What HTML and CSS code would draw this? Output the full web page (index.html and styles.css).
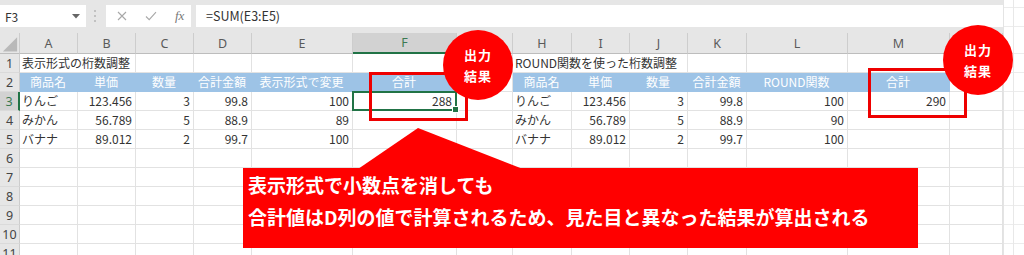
FILE: index.html
```html
<!DOCTYPE html>
<html lang="ja">
  <head>
    <meta charset="utf-8">
    <title>桁数調整</title>
    <link rel="stylesheet" href="styles.css">
  </head>
  <body>
    <div class="page">
      <div class="excel">

        <div class="toolbar">
          <div class="namebox">
            <span>F3</span>
            <svg class="drop" width="8" height="5" viewBox="0 0 8 5"><polygon points="0,0 8,0 4,4.5" fill="#666"/></svg>
          </div>
          <svg class="dots" width="4" height="14" viewBox="0 0 4 14">
            <circle cx="2" cy="2" r="1" fill="#b5b5b5"/>
            <circle cx="2" cy="7" r="1" fill="#b5b5b5"/>
            <circle cx="2" cy="12" r="1" fill="#b5b5b5"/>
          </svg>
          <div class="funcs">
            <svg width="10" height="10" viewBox="0 0 10 10"><path d="M1 1 L9 9 M9 1 L1 9" stroke="#a8a8a8" stroke-width="1.1" fill="none"/></svg>
            <svg width="12" height="10" viewBox="0 0 12 10"><path d="M1 5.5 L4.2 8.6 L11 1.2" stroke="#a8a8a8" stroke-width="1.1" fill="none"/></svg>
            <span class="fx">fx</span>
          </div>
          <div class="formula">=SUM(E3:E5)</div>
        </div>

        <div class="sheet">
          <!-- column headers -->
          <div class="ch corner">
            <svg width="20" height="20" viewBox="0 0 20 20"><polygon points="3,19 18,19 18,4" fill="#b9b9b9"/></svg>
          </div>
          <div class="ch">A</div><div class="ch">B</div><div class="ch">C</div><div class="ch">D</div>
          <div class="ch">E</div><div class="ch sel">F</div><div class="ch"></div><div class="ch">H</div>
          <div class="ch">I</div><div class="ch">J</div><div class="ch">K</div><div class="ch">L</div>
          <div class="ch">M</div><div class="ch"></div>

          <!-- row 1 -->
          <div class="rh">1</div>
          <div class="c span2">表示形式の桁数調整</div>
          <div class="c"></div><div class="c"></div><div class="c"></div><div class="c"></div><div class="c"></div>
          <div class="c span3">ROUND関数を使った桁数調整</div>
          <div class="c"></div><div class="c"></div><div class="c"></div><div class="c"></div>

          <!-- row 2 -->
          <div class="rh">2</div>
          <div class="c h">商品名</div><div class="c h">単価</div><div class="c h">数量</div>
          <div class="c h">合計金額</div><div class="c h">表示形式で変更</div><div class="c h">合計</div>
          <div class="c"></div>
          <div class="c h">商品名</div><div class="c h">単価</div><div class="c h">数量</div>
          <div class="c h">合計金額</div><div class="c h">ROUND関数</div><div class="c h">合計</div>
          <div class="c"></div>

          <!-- row 3 -->
          <div class="rh sel">3</div>
          <div class="c">りんご</div><div class="c n">123.456</div><div class="c n">3</div>
          <div class="c n">99.8</div><div class="c n">100</div><div class="c n active">288</div>
          <div class="c"></div>
          <div class="c">りんご</div><div class="c n">123.456</div><div class="c n">3</div>
          <div class="c n">99.8</div><div class="c n">100</div><div class="c n">290</div>
          <div class="c"></div>

          <!-- row 4 -->
          <div class="rh">4</div>
          <div class="c">みかん</div><div class="c n">56.789</div><div class="c n">5</div>
          <div class="c n">88.9</div><div class="c n">89</div><div class="c"></div>
          <div class="c"></div>
          <div class="c">みかん</div><div class="c n">56.789</div><div class="c n">5</div>
          <div class="c n">88.9</div><div class="c n">90</div><div class="c"></div>
          <div class="c"></div>

          <!-- row 5 -->
          <div class="rh">5</div>
          <div class="c">バナナ</div><div class="c n">89.012</div><div class="c n">2</div>
          <div class="c n">99.7</div><div class="c n">100</div><div class="c"></div>
          <div class="c"></div>
          <div class="c">バナナ</div><div class="c n">89.012</div><div class="c n">2</div>
          <div class="c n">99.7</div><div class="c n">100</div><div class="c"></div>
          <div class="c"></div>

          <div class="rh">6</div>
          <div class="c"></div><div class="c"></div><div class="c"></div><div class="c"></div><div class="c"></div><div class="c"></div><div class="c"></div>
          <div class="c"></div><div class="c"></div><div class="c"></div><div class="c"></div><div class="c"></div><div class="c"></div><div class="c"></div>
          <div class="rh">7</div>
          <div class="c"></div><div class="c"></div><div class="c"></div><div class="c"></div><div class="c"></div><div class="c"></div><div class="c"></div>
          <div class="c"></div><div class="c"></div><div class="c"></div><div class="c"></div><div class="c"></div><div class="c"></div><div class="c"></div>
          <div class="rh">8</div>
          <div class="c"></div><div class="c"></div><div class="c"></div><div class="c"></div><div class="c"></div><div class="c"></div><div class="c"></div>
          <div class="c"></div><div class="c"></div><div class="c"></div><div class="c"></div><div class="c"></div><div class="c"></div><div class="c"></div>
          <div class="rh">9</div>
          <div class="c"></div><div class="c"></div><div class="c"></div><div class="c"></div><div class="c"></div><div class="c"></div><div class="c"></div>
          <div class="c"></div><div class="c"></div><div class="c"></div><div class="c"></div><div class="c"></div><div class="c"></div><div class="c"></div>
          <div class="rh">10</div>
          <div class="c"></div><div class="c"></div><div class="c"></div><div class="c"></div><div class="c"></div><div class="c"></div><div class="c"></div>
          <div class="c"></div><div class="c"></div><div class="c"></div><div class="c"></div><div class="c"></div><div class="c"></div><div class="c"></div>
          <div class="rh">11</div>
          <div class="c"></div><div class="c"></div><div class="c"></div><div class="c"></div><div class="c"></div><div class="c"></div><div class="c"></div>
          <div class="c"></div><div class="c"></div><div class="c"></div><div class="c"></div><div class="c"></div><div class="c"></div><div class="c"></div>
        </div>
      </div>

      <div class="edge"></div>

      <!-- annotations drawn over the sheet -->
      <div class="frame frame_left"></div>
      <div class="frame frame_right"></div>
      <div class="badge badge_left"><span>出力</span><span>結果</span></div>
      <div class="badge badge_right"><span>出力</span><span>結果</span></div>
      <div class="callout">
        <p>表示形式で小数点を消しても</p>
        <p>合計値はD列の値で計算されるため、見た目と異なった結果が算出される</p>
      </div>
    </div>
  </body>
</html>
```

FILE: styles.css
```css
body {
  margin: 0;
  background: #ffffff;
  font-family: "Noto Sans CJK JP", "Noto Sans", sans-serif;
  color: #333333;
}

.page {
  position: relative;
  display: flex;
  width: 1024px;
  height: 255px;
  overflow: hidden;
}

.excel {
  width: 1003px;
  flex: none;
}

.edge {
  flex: 1;
  border-left: 1px solid #e4e4e4;
  background:
    linear-gradient(to right, transparent 9px, #e8e8e8 9px, #e8e8e8 10px, transparent 10px),
    repeating-linear-gradient(to bottom, transparent 0, transparent 18px, #ececec 18px, #ececec 19px);
  background-position: 0 0, 0 35px;
}

/* formula bar */

.toolbar {
  display: flex;
  align-items: center;
  height: 33px;
  padding-bottom: 6px;
  padding-top: 5px;
  box-sizing: border-box;
  background: #e6e6e6;
}

.namebox {
  display: flex;
  align-items: center;
  justify-content: space-between;
  width: 86px;
  height: 22px;
  padding: 0 6px 0 5px;
  box-sizing: border-box;
  background: #ffffff;
  font-size: 12px;
}

.dots {
  margin: 0 9px 0 7px;
}

.funcs {
  display: flex;
  align-items: center;
  gap: 18px;
  width: 85px;
  height: 22px;
  padding-left: 11px;
  box-sizing: border-box;
  background: #ffffff;
}

.fx {
  font-family: "Liberation Serif", serif;
  font-style: italic;
  font-size: 13px;
  color: #777777;
}

.formula {
  flex: 1;
  height: 22px;
  margin-left: 5px;
  padding-left: 10px;
  background: #ffffff;
  font-size: 12.5px;
  line-height: 22px;
}

/* sheet grid */

.sheet {
  display: grid;
  grid-template-columns: 20px 58px 58px 58px 58px 101px 104px 56px 59px 58px 58px 59px 101px 102px 53px;
  grid-template-rows: 21px repeat(11, 19px);
  font-size: 12px;
  background: #ffffff;
}

.ch {
  display: flex;
  align-items: center;
  justify-content: center;
  background: #e6e6e6;
  border-right: 1px solid #cdcdcd;
  border-bottom: 1px solid #bdbdbd;
  font-family: "Noto Sans", sans-serif;
  font-size: 12.5px;
  color: #5a5a5a;
}

.corner {
  align-items: flex-end;
}

.ch.sel {
  background: #d2d2d2;
  border-bottom: 2px solid #217346;
  color: #3b7a52;
}

.rh {
  display: flex;
  align-items: center;
  justify-content: center;
  background: #e6e6e6;
  border-right: 1px solid #cdcdcd;
  border-bottom: 1px solid #dadada;
  font-family: "Noto Sans", sans-serif;
  font-size: 12.5px;
  color: #444444;
}

.rh.sel {
  background: #d2d2d2;
  border-right: 2px solid #217346;
  color: #3b7a52;
}

.c {
  box-sizing: border-box;
  border-right: 1px solid #e2e2e2;
  border-bottom: 1px solid #e2e2e2;
  padding: 0 3px 0 2px;
  line-height: 18px;
  white-space: nowrap;
}

.span2 {
  grid-column: span 2;
}

.span3 {
  grid-column: span 3;
}

.n {
  text-align: right;
}

.h {
  background: #9dc3e6;
  border-color: #9dc3e6;
  color: #ffffff;
  text-align: center;
}

.active {
  position: relative;
  border: 2px solid #217346;
  line-height: 15px;
  margin-left: -1px;
  margin-top: -1px;
  height: 20px;
}

.active:after {
  content: '';
  position: absolute;
  right: -4px;
  bottom: -4px;
  width: 5px;
  height: 5px;
  background: #217346;
  border: 1px solid #ffffff;
}

/* annotations */

.frame {
  position: absolute;
  border: 3px solid #ee0000;
  box-sizing: border-box;
}

.frame_left {
  left: 369px;
  top: 72px;
  width: 99px;
  height: 49px;
}

.frame_right {
  left: 868px;
  top: 68px;
  width: 99px;
  height: 50px;
}

.badge {
  position: absolute;
  width: 70px;
  height: 70px;
  border-radius: 50%;
  background: #ff0000;
  color: #ffffff;
  display: flex;
  flex-direction: column;
  align-items: center;
  justify-content: center;
  font-size: 13px;
  font-weight: bold;
  letter-spacing: 1px;
  line-height: 21px;
  padding-bottom: 1px;
  box-sizing: border-box;
}

.badge_left {
  left: 443px;
  top: 30px;
}

.badge_right {
  left: 943px;
  top: 25px;
}

.callout {
  position: absolute;
  left: 243px;
  top: 168px;
  width: 675px;
  height: 80px;
  padding: 1px 0 0 5px;
  box-sizing: border-box;
  background: #ff0000;
  color: #ffffff;
  font-size: 19px;
  font-weight: bold;
  line-height: 32px;
  white-space: nowrap;
}

.callout:before {
  content: '';
  position: absolute;
  left: 115px;
  top: -40px;
  width: 165px;
  height: 41px;
  background: #ff0000;
  clip-path: polygon(0 100%, 60px 0, 100% 100%);
}

.callout p {
  margin: 0;
}
```
